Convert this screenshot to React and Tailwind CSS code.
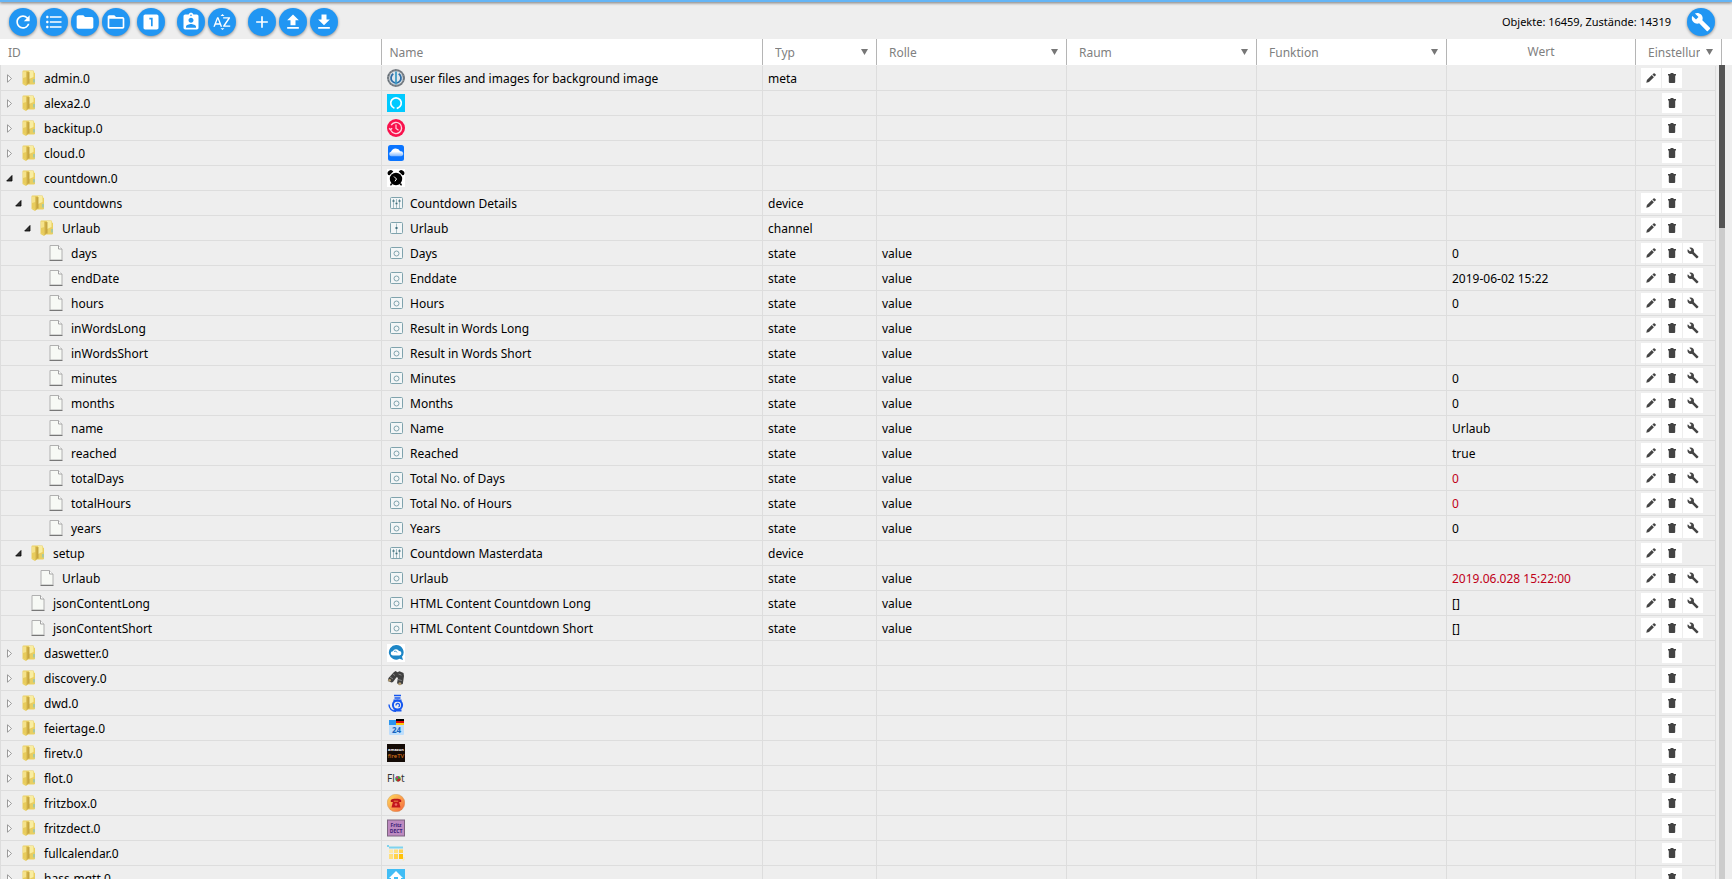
import {
  MdRefresh,
  MdFormatListBulleted,
  MdFolder,
  MdFolderOpen,
  MdLooksOne,
  MdAssignmentInd,
  MdSortByAlpha,
  MdAdd,
  MdFileUpload,
  MdFileDownload,
  MdBuild,
} from "react-icons/md";

const toolbar = [
  {
    margin: "",
    buttons: [
      { title: "Aktualisieren", icon: MdRefresh },
      { title: "Liste", icon: MdFormatListBulleted },
      { title: "Alle schließen", icon: MdFolder },
      { title: "Alle öffnen", icon: MdFolderOpen },
    ],
  },
  { margin: "ml-[7px]", buttons: [{ title: "Zustände", icon: MdLooksOne }] },
  {
    margin: "ml-3",
    buttons: [
      { title: "Expertenmodus", icon: MdAssignmentInd },
      { title: "Sortieren", icon: MdSortByAlpha },
    ],
  },
  {
    margin: "ml-3",
    buttons: [
      { title: "Hinzufügen", icon: MdAdd },
      { title: "Hochladen", icon: MdFileUpload },
      { title: "Herunterladen", icon: MdFileDownload },
    ],
  },
];

const state = (level, id, name, value = "", red = false) => ({
  level,
  id,
  name,
  value,
  red,
  type: "state",
  role: "value",
  icon: "state",
});

const rows = [
  { id: "admin.0", level: 0, icon: "admin", name: "user files and images for background image", type: "meta" },
  { id: "alexa2.0", level: 0, icon: "alexa" },
  { id: "backitup.0", level: 0, icon: "backitup" },
  { id: "cloud.0", level: 0, icon: "cloud" },
  { id: "countdown.0", level: 0, icon: "countdown", open: true },
  { id: "countdowns", level: 1, icon: "device", name: "Countdown Details", type: "device", open: true },
  { id: "Urlaub", level: 2, icon: "channel", name: "Urlaub", type: "channel", open: true },
  state(3, "days", "Days", "0"),
  state(3, "endDate", "Enddate", "2019-06-02 15:22"),
  state(3, "hours", "Hours", "0"),
  state(3, "inWordsLong", "Result in Words Long"),
  state(3, "inWordsShort", "Result in Words Short"),
  state(3, "minutes", "Minutes", "0"),
  state(3, "months", "Months", "0"),
  state(3, "name", "Name", "Urlaub"),
  state(3, "reached", "Reached", "true"),
  state(3, "totalDays", "Total No. of Days", "0", true),
  state(3, "totalHours", "Total No. of Hours", "0", true),
  state(3, "years", "Years", "0"),
  { id: "setup", level: 1, icon: "device", name: "Countdown Masterdata", type: "device", open: true },
  state(2, "Urlaub", "Urlaub", "2019.06.028 15:22:00", true),
  state(1, "jsonContentLong", "HTML Content Countdown Long", "[]"),
  state(1, "jsonContentShort", "HTML Content Countdown Short", "[]"),
  { id: "daswetter.0", level: 0, icon: "daswetter" },
  { id: "discovery.0", level: 0, icon: "discovery" },
  { id: "dwd.0", level: 0, icon: "dwd" },
  { id: "feiertage.0", level: 0, icon: "feiertage" },
  { id: "firetv.0", level: 0, icon: "firetv" },
  { id: "flot.0", level: 0, icon: "flot" },
  { id: "fritzbox.0", level: 0, icon: "fritzbox" },
  { id: "fritzdect.0", level: 0, icon: "fritzdect" },
  { id: "fullcalendar.0", level: 0, icon: "fullcalendar" },
  { id: "hass-mqtt.0", level: 0, icon: "hass" },
];

const indents = ["pl-[5px]", "pl-[14px]", "pl-[23px]", "pl-[32px]"];

const adapterIcons = {
  admin: (
    <>
      <circle cx="9" cy="9" r="9" fill="#8a9096" />
      <circle cx="9" cy="9" r="8" fill="none" stroke="#5d666e" strokeDasharray="2 1" />
      <circle cx="9" cy="9" r="6.8" fill="#dfe7ec" />
      <path d="M6.300 4.800a5 5 0 1 0 5.400 0" fill="none" stroke="#2f6ea5" strokeWidth="1.800" />
      <path d="M9 2.500v13" stroke="#3f9cc6" strokeWidth="1.800" />
    </>
  ),
  alexa: (
    <>
      <path d="M0 0h18v18H0z" fill="#00caff" />
      <path d="M7.400 14.200a5.300 5.300 0 1 1 3.200 0l-.6-.7" fill="none" stroke="#fff" strokeWidth="1.700" />
    </>
  ),
  backitup: (
    <>
      <circle cx="9" cy="9" r="9" fill="#f9114c" />
      <path d="M4 11.500a5.600 5.600 0 1 0 .2-5.400M2.200 9.200l1.300 1.600 1.600-1.600" fill="none" stroke="#ffd3df" strokeWidth="1.400" />
      <path d="M9 5.500v4l2.500 1.800" fill="none" stroke="#ffd3df" strokeWidth="1.200" />
    </>
  ),
  cloud: (
    <>
      <defs>
        <linearGradient id="cloudFade" x2="0" y2="1">
          <stop offset=".4" stopColor="#fff" />
          <stop offset="1" stopColor="#7db5ff" />
        </linearGradient>
      </defs>
      <rect x="1" y="1" width="16" height="16" rx="2.500" fill="#0a74ff" />
      <path d="M4 12.200a2.300 2.300 0 0 1 0-4.500 5 5 0 0 1 9.200-.4 2.500 2.500 0 0 1 1 4.900z" fill="url(#cloudFade)" />
    </>
  ),
  countdown: (
    <>
      <path d="M0 0h18v18H0z" fill="#fff" />
      <circle cx="9" cy="10" r="6.200" />
      <path d="M1.200 6A3 3 0 0 1 6.300 2.600L2.500 6.300zM16.800 6a3 3 0 0 0-5.100-3.400l3.800 3.700zM4 14l1.500 1-1.500 1.800-1-.8zM14 14l-1.500 1 1.500 1.800 1-.8z" />
      <path d="M7 7.500l2.500 2.500-1.500 2.300" fill="none" stroke="#fff" />
    </>
  ),
  daswetter: (
    <>
      <path d="M0 0h18v18H0z" fill="#fff" />
      <path d="M9 1a7.300 7.300 0 1 0 3.500 13.800L16 16l-1-3.200A7.300 7.300 0 0 0 9 1z" fill="#1d86c6" />
      <path d="M5.800 11.500a2.100 2.100 0 0 1 .1-4.200A3.300 3.300 0 0 1 12 7.100a2.200 2.200 0 0 1 .4 4.400z" fill="#fff" />
      <path d="M7 7.500a2 2 0 0 1 3 1" fill="none" stroke="#1d86c6" strokeWidth=".8" />
    </>
  ),
  discovery: (
    <>
      <path d="M6.500 3.500L8.500 2l2 1.200 2-1 4 1.800.5 3-1.200 8-3.300 1-2.500-1.800 1-5.500-1.500-.5-3.500 4.800-1.500.5L.8 12l.7-3z" fill="#404040" />
      <path d="M6 5l2 1.500M11.500 5l3 1.200M10.800 10.500l4 1M3 8l3 2" stroke="#858585" />
      <circle cx="2.600" cy="11.300" r="1.400" fill="#b09a70" />
      <circle cx="12.800" cy="14.800" r="1.500" fill="#b09a70" />
    </>
  ),
  dwd: (
    <g fill="none" stroke="#1557f0">
      <path d="M7 1.500h7M7.500 4h6" strokeWidth="1.600" />
      <path d="M6.500 6.500h8M6.500 16.500h8" strokeWidth="1.800" />
      <circle cx="10.500" cy="11" r="4.600" strokeWidth="2" />
      <path d="M9 11.500a1.800 1.800 0 1 1 2.500 1.400" strokeWidth="1.300" />
      <path d="M2 10.500c0 4 3 6.800 7 6.800" strokeWidth="1.400" />
    </g>
  ),
  feiertage: (
    <>
      <rect x="2" y="1" width="15" height="15" rx="1" fill="#bfdefb" />
      <path d="M2 1h8v5H2z" fill="#2b96ef" />
      <path d="M9 0h8v2H9z" />
      <path d="M9 2h8v2H9z" fill="#d80c0c" />
      <path d="M9 4h8v2H9z" fill="#ffc90e" />
      <text x="9.500" y="14" textAnchor="middle" fontSize="8" fontWeight="700" fill="#1565c0">24</text>
    </>
  ),
  firetv: (
    <>
      <path d="M0 0h18v18H0z" fill="#140b06" />
      <text x="9" y="7" textAnchor="middle" fontSize="4" fontWeight="700" fill="#fff">amazon</text>
      <text x="9" y="14" textAnchor="middle" fontSize="6" fill="#e07b1a">fireTV</text>
    </>
  ),
  flot: (
    <>
      <text x="0" y="12.500" fontSize="10" fill="#333">Fl</text>
      <circle cx="11" cy="9.800" r="2.700" fill="#3aa335" />
      <path d="M11 9.800V7.100a2.700 2.700 0 0 0-2.500 2z" fill="#d12c8a" />
      <path d="M11 9.800h2.700a2.700 2.700 0 0 1-4.200 2.200z" fill="#c3212f" />
      <text x="14" y="12.500" fontSize="10" fill="#333">t</text>
    </>
  ),
  fritzbox: (
    <>
      <defs>
        <linearGradient id="phoneFade" x2="1" y2="1">
          <stop offset=".1" stopColor="#ffd45c" />
          <stop offset="1" stopColor="#f4603c" />
        </linearGradient>
      </defs>
      <circle cx="9" cy="9" r="8.800" fill="url(#phoneFade)" stroke="#c98a4a" strokeWidth=".4" />
      <path d="M3.800 8V6C5.300 4.200 12.700 4.200 14.200 6v2h-3V6.800H6.800V8z" fill="#b8141a" />
      <path d="M6 7.500h6l1.500 6h-9z" fill="#c4161c" />
      <circle cx="9" cy="10.500" r="1.300" fill="#ee6a63" />
    </>
  ),
  fritzdect: (
    <>
      <rect x=".5" y="1" width="17" height="16" fill="#bd8ac0" stroke="#7d6580" />
      <text x="9" y="7.500" textAnchor="middle" fontSize="5" fontWeight="700" fill="#3b2179">Fritz</text>
      <text x="9" y="13.500" textAnchor="middle" fontSize="5" fontWeight="700" fill="#3b2179">DECT</text>
    </>
  ),
  fullcalendar: (
    <>
      <path d="M0 1h2v2H0zM2 2.500h14v2H2z" fill="#7fd3ee" />
      <path d="M2 5.500h4V9H2z" fill="#ffe9a6" />
      <path d="M7 5.500h4V9H7zM2 10h4v5H2z" fill="#ffdf7d" />
      <path d="M12 5.500h4V9h-4zM7 10h4v5H7z" fill="#ffd24d" />
      <path d="M12 10h4v5h-4z" fill="#ffc107" />
      <path d="M15.500 16h1.500v-3" fill="none" stroke="#ffe9a6" />
    </>
  ),
  hass: (
    <>
      <path d="M0 0h18v18H0z" fill="#41bdf5" />
      <path d="M9 2l7 7h-2v7H4V9H2z" fill="#fff" />
      <path d="M7 8h4v5H7z" fill="#41bdf5" />
    </>
  ),
};

const objectIcons = {
  device: (
    <>
      <path d="M3.500 2v9M6.500 2v9M9.500 2v9" strokeOpacity=".7" />
      <path d="M2.500 4h2M5.500 6.500h2M8.500 4h2" stroke="#3f6f7c" strokeWidth="1.500" />
    </>
  ),
  channel: (
    <>
      <path d="M6.500 1.500v10" strokeOpacity=".7" />
      <path d="M5.500 6h2" stroke="#3f6f7c" strokeWidth="2" />
    </>
  ),
  state: <circle cx="6.500" cy="6.500" r="2.500" />,
};

function RowIcon({ name }) {
  if (objectIcons[name]) {
    return (
      <svg viewBox="0 0 13 13" className="mx-[3px] h-[13px] w-[13px] shrink-0" fill="none" stroke="#7fa3ad">
        <rect x=".5" y=".5" width="12" height="11" rx="1" fill="#f3f6f7" />
        {objectIcons[name]}
      </svg>
    );
  }
  return (
    <svg viewBox="0 0 18 18" className="mr-px h-[18px] w-[18px] shrink-0">
      {adapterIcons[name]}
    </svg>
  );
}

function Expander({ open }) {
  return (
    <button type="button" aria-label={open ? "Schließen" : "Öffnen"} className="w-[7px] shrink-0">
      <svg viewBox="0 0 7 9" className="h-[9px] w-[7px]">
        {open ? (
          <path d="M6 1.500v5.500H.7z" fill="#333" stroke="#000" strokeWidth=".8" />
        ) : (
          <path d="M1.500.8v7.400L5.500 4.500z" fill="#fff" stroke="#909090" strokeWidth=".9" />
        )}
      </svg>
    </button>
  );
}

function FolderIcon() {
  return (
    <svg viewBox="0 0 14 16" className="h-4 w-[14px] shrink-0">
      <path d="M.5 1.500Q.5.500 1.500.5h9.500q1 0 1 1v1l1 .5v11l-1 .5H5.500L4 16 .5 14z" fill="#e9cf62" />
      <path d="M1 1.500h3.500v13L1 13.300z" fill="#f5e28a" />
      <path d="M1 8l3.500-1v7.500L1 13.300z" fill="#e8cc5c" />
      <path d="M4.500 1.500L7 2.500V13l-2.500 2.500z" fill="#cfae45" />
      <path d="M7 1h4.500v6L7 9z" fill="#f9eda0" />
      <path d="M7 2v11.500" stroke="#b8983a" strokeWidth=".8" />
      <path d="M12 9v3.500" stroke="#6fc3d6" />
    </svg>
  );
}

function FileIcon() {
  return (
    <svg viewBox="0 0 14 16" className="h-4 w-[14px] shrink-0">
      <path d="M1 .5h8.500l3.500 3.500v11H1z" fill="#f7f9f5" stroke="#b0b0b0" />
      <path d="M9.500.500v3.500h3.500" fill="#fff" stroke="#a3a3a3" />
      <path d="M.5 15.500h13" stroke="#777" />
    </svg>
  );
}

function PencilIcon() {
  return (
    <svg viewBox="0 0 10 10" className="h-[10px] w-[10px]" fill="currentColor">
      <path d="M.3 9.700l.6-2.700 4.900-4.900 2.100 2.100L3 9.100zM6.400 1.500L7.500.4q.6-.5 1.200 0l.9.9q.5.600 0 1.200L8.500 3.600z" />
    </svg>
  );
}

function TrashIcon() {
  return (
    <svg viewBox="0 0 8 10" className="h-[10px] w-2" fill="currentColor">
      <path d="M2.500 0h3v1H8v1.500H0V1h2.500zM.8 2.500h6.400V9q0 1-1 1H1.800q-1 0-1-1z" />
    </svg>
  );
}

function WrenchIcon() {
  return <MdBuild size={12} />;
}

function RoundButton({ title, icon: Icon }) {
  return (
    <button
      type="button"
      title={title}
      aria-label={title}
      className="flex h-7 w-7 items-center justify-center rounded-full bg-[#2196f3] text-white shadow-[0_1px_3px_rgba(0,0,0,0.4)]"
    >
      <Icon size={20} />
    </button>
  );
}

function CellButton({ title, icon: Icon }) {
  return (
    <button
      type="button"
      title={title}
      aria-label={title}
      className="flex h-5 w-5 items-center justify-center bg-white text-[#444]"
    >
      <Icon />
    </button>
  );
}

function Columns({ last }) {
  return (
    <colgroup>
      <col />
      <col />
      <col className="w-[114px]" />
      <col className="w-[190px]" />
      <col className="w-[190px]" />
      <col className="w-[190px]" />
      <col className="w-[189px]" />
      <col className={last} />
    </colgroup>
  );
}

function FilterHead({ label }) {
  return (
    <th className="border-r border-[#b5b5b5] p-0 font-normal">
      <div className="flex items-center pr-2 pl-3">
        <span className="flex-1 overflow-hidden pt-[2px] text-left whitespace-nowrap">{label}</span>
        <svg viewBox="0 0 7 6" className="ml-[6px] h-[6px] w-[7px] shrink-0" fill="#777">
          <path d="M0 0h7L3.500 6z" />
        </svg>
      </div>
    </th>
  );
}

function TextCell({ children, color = "" }) {
  return (
    <td className={color}>
      <div className="flex h-6 items-center pt-[2px] pl-[5px]">{children}</div>
    </td>
  );
}

export default function App() {
  return (
    <div className="flex h-screen flex-col overflow-hidden bg-[#eee] font-['Noto_Sans',sans-serif] text-[12px] leading-4 text-black">
      <div className="h-[2px] shrink-0 bg-[#64b5f6] shadow-[0_1px_3px_rgba(0,0,0,0.6)]" />

      {/* Toolbar */}
      <div className="flex h-[37px] shrink-0 items-center pt-[3px] pr-[17px] pl-[9px]">
        <div className="flex flex-1">
          {toolbar.map((group, i) => (
            <div key={i} className={`flex gap-[3px] ${group.margin}`}>
              {group.buttons.map((b) => (
                <RoundButton key={b.title} {...b} />
              ))}
            </div>
          ))}
        </div>
        <span className="mr-4 text-[11px]">Objekte: 16459, Zustände: 14319</span>
        <RoundButton title="Einstellungen" icon={MdBuild} />
      </div>

      {/* Header */}
      <div className="shrink-0 bg-white pr-[10px]">
        <table className="w-full table-fixed border-separate border-spacing-0 text-[#808080]">
          <Columns last="w-[86px]" />
          <thead>
            <tr className="h-[26px]">
              <th className="border-r border-[#b5b5b5] pt-[2px] pb-0 pl-2 text-left font-normal">ID</th>
              <th className="border-r border-[#b5b5b5] pt-[2px] pb-0 pl-2 text-left font-normal">Name</th>
              <FilterHead label="Typ" />
              <FilterHead label="Rolle" />
              <FilterHead label="Raum" />
              <FilterHead label="Funktion" />
              <th className="border-r border-[#b5b5b5] p-0 text-center font-normal">Wert</th>
              <FilterHead label="Einstellungen" />
            </tr>
          </thead>
        </table>
      </div>

      {/* Object tree */}
      <div className="flex min-h-0 flex-1 gap-[3px] pr-[7px]">
        <div className="min-w-0 flex-1 overflow-hidden">
          <table className="w-full table-fixed border-separate border-spacing-0 border-l border-[#ddd] pt-px [&_td]:h-[25px] [&_td]:border-r [&_td]:border-b [&_td]:border-[#ddd] [&_td]:py-0 [&_td]:whitespace-nowrap">
            <Columns last="w-[80px]" />
            <tbody>
              {rows.map((row, i) => (
                <tr key={i}>
                  <td className={indents[row.level]}>
                    <div className="flex h-6 items-center">
                      {row.type === "state" ? <span className="w-[7px]" /> : <Expander open={row.open} />}
                      <span className="mr-2 ml-[9px]">
                        {row.type === "state" ? <FileIcon /> : <FolderIcon />}
                      </span>
                      <span className="pt-[2px]">{row.id}</span>
                    </div>
                  </td>
                  <td className="pl-[5px]">
                    <div className="flex h-6 items-center gap-1">
                      <RowIcon name={row.icon} />
                      <span className="pt-[2px]">{row.name}</span>
                    </div>
                  </td>
                  <TextCell>{row.type}</TextCell>
                  <TextCell>{row.role}</TextCell>
                  <td />
                  <td />
                  <TextCell color={row.red ? "text-[#c00018]" : ""}>{row.value}</TextCell>
                  <td className="pl-[5px]">
                    <div className="flex gap-px">
                      {row.type ? <CellButton title="Bearbeiten" icon={PencilIcon} /> : <span className="w-5" />}
                      <CellButton title="Löschen" icon={TrashIcon} />
                      {row.type === "state" && <CellButton title="Konfigurieren" icon={WrenchIcon} />}
                    </div>
                  </td>
                </tr>
              ))}
            </tbody>
          </table>
        </div>
        <div className="w-[6px] bg-[#ccc]">
          <div className="h-1/5 bg-[#555]" />
        </div>
      </div>
    </div>
  );
}
